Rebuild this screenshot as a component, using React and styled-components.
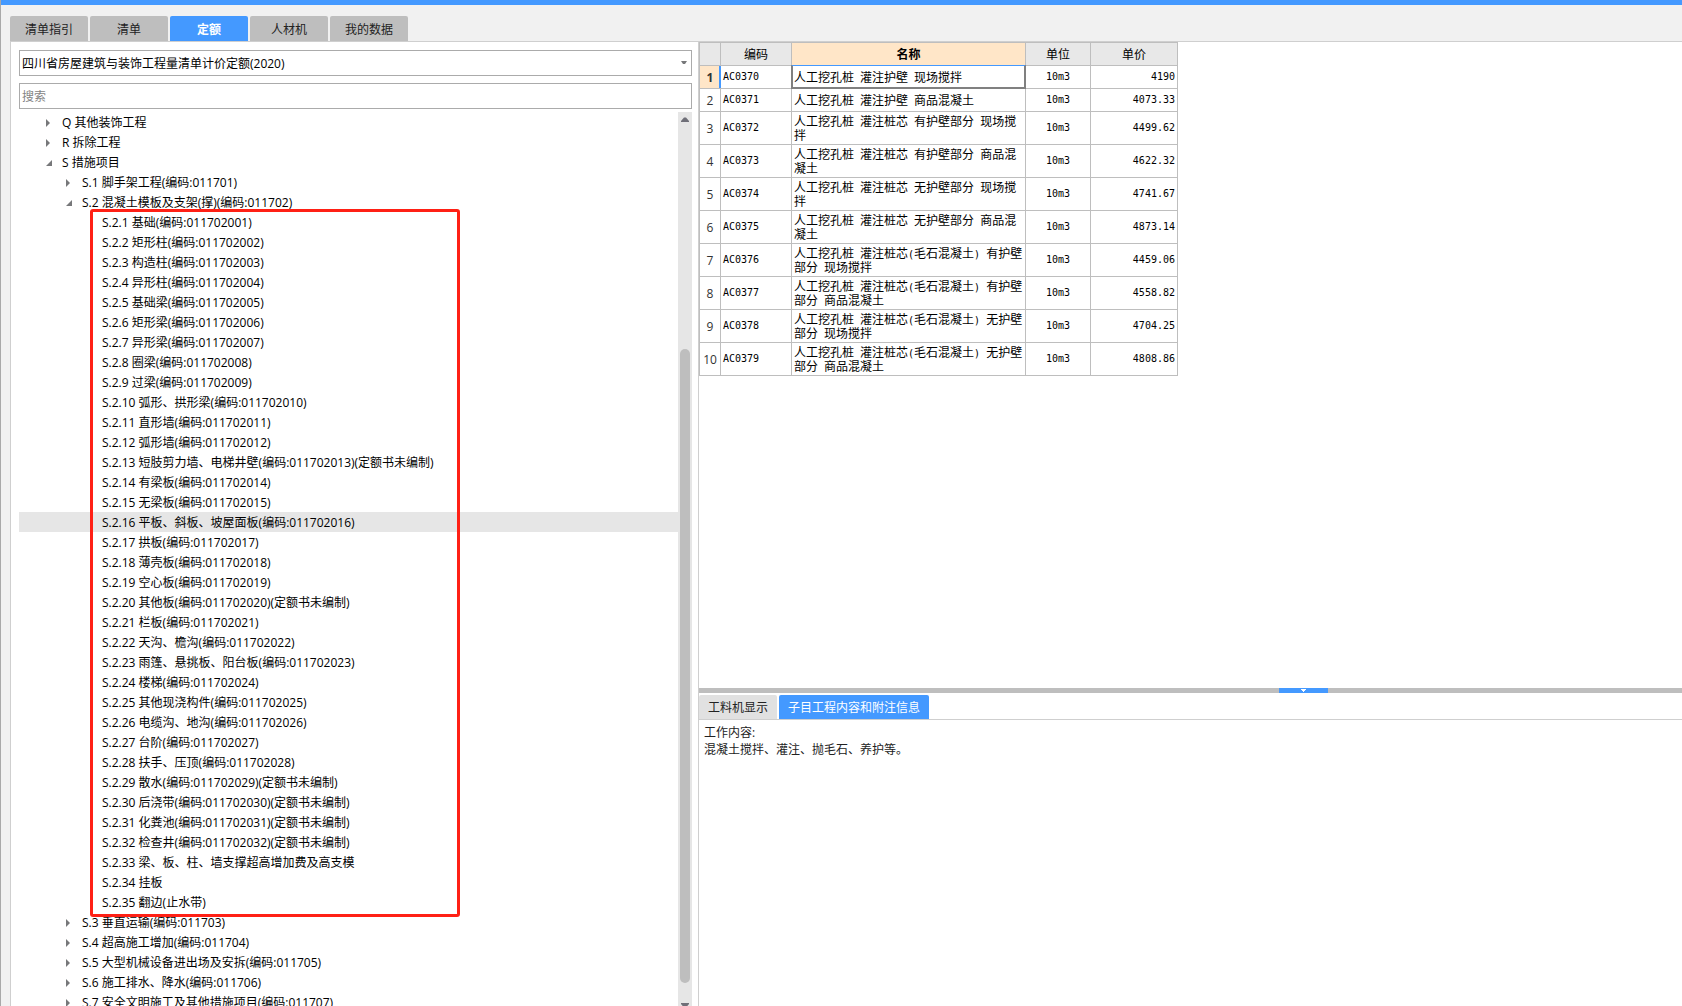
import React, { useState } from 'react'
import styled, { createGlobalStyle, css } from 'styled-components'

const GlobalStyle = createGlobalStyle`
  *, *::before, *::after {
    box-sizing: border-box;
  }
  body {
    margin: 0;
    background: #f1f1f1;
    overflow: hidden;
  }
  body, button, input, select {
    font-family: 'Open Sans', 'Noto Sans CJK SC', sans-serif;
    font-size: 12px;
    color: #000;
  }
`

const topTabs = ['清单指引', '清单', '定额', '人材机', '我的数据']

const subItems = [
  'S.2.1 基础(编码:011702001)',
  'S.2.2 矩形柱(编码:011702002)',
  'S.2.3 构造柱(编码:011702003)',
  'S.2.4 异形柱(编码:011702004)',
  'S.2.5 基础梁(编码:011702005)',
  'S.2.6 矩形梁(编码:011702006)',
  'S.2.7 异形梁(编码:011702007)',
  'S.2.8 圈梁(编码:011702008)',
  'S.2.9 过梁(编码:011702009)',
  'S.2.10 弧形、拱形梁(编码:011702010)',
  'S.2.11 直形墙(编码:011702011)',
  'S.2.12 弧形墙(编码:011702012)',
  'S.2.13 短肢剪力墙、电梯井壁(编码:011702013)(定额书未编制)',
  'S.2.14 有梁板(编码:011702014)',
  'S.2.15 无梁板(编码:011702015)',
  'S.2.16 平板、斜板、坡屋面板(编码:011702016)',
  'S.2.17 拱板(编码:011702017)',
  'S.2.18 薄壳板(编码:011702018)',
  'S.2.19 空心板(编码:011702019)',
  'S.2.20 其他板(编码:011702020)(定额书未编制)',
  'S.2.21 栏板(编码:011702021)',
  'S.2.22 天沟、檐沟(编码:011702022)',
  'S.2.23 雨篷、悬挑板、阳台板(编码:011702023)',
  'S.2.24 楼梯(编码:011702024)',
  'S.2.25 其他现浇构件(编码:011702025)',
  'S.2.26 电缆沟、地沟(编码:011702026)',
  'S.2.27 台阶(编码:011702027)',
  'S.2.28 扶手、压顶(编码:011702028)',
  'S.2.29 散水(编码:011702029)(定额书未编制)',
  'S.2.30 后浇带(编码:011702030)(定额书未编制)',
  'S.2.31 化粪池(编码:011702031)(定额书未编制)',
  'S.2.32 检查井(编码:011702032)(定额书未编制)',
  'S.2.33 梁、板、柱、墙支撑超高增加费及高支模',
  'S.2.34 挂板',
  'S.2.35 翻边(止水带)',
].map(label => ({ label }))

const tree = [
  { label: 'Q 其他装饰工程', branch: true },
  { label: 'R 拆除工程', branch: true },
  {
    label: 'S 措施项目',
    branch: true,
    children: [
      { label: 'S.1 脚手架工程(编码:011701)', branch: true },
      {
        label: 'S.2 混凝土模板及支架(撑)(编码:011702)',
        branch: true,
        marked: true,
        children: subItems,
      },
      { label: 'S.3 垂直运输(编码:011703)', branch: true },
      { label: 'S.4 超高施工增加(编码:011704)', branch: true },
      { label: 'S.5 大型机械设备进出场及安拆(编码:011705)', branch: true },
      { label: 'S.6 施工排水、降水(编码:011706)', branch: true },
      { label: 'S.7 安全文明施工及其他措施项目(编码:011707)', branch: true },
    ],
  },
]

const rows = [
  ['AC0370', '人工挖孔桩 灌注护壁 现场搅拌', '10m3', '4190'],
  ['AC0371', '人工挖孔桩 灌注护壁 商品混凝土', '10m3', '4073.33'],
  ['AC0372', '人工挖孔桩 灌注桩芯 有护壁部分 现场搅拌', '10m3', '4499.62'],
  ['AC0373', '人工挖孔桩 灌注桩芯 有护壁部分 商品混凝土', '10m3', '4622.32'],
  ['AC0374', '人工挖孔桩 灌注桩芯 无护壁部分 现场搅拌', '10m3', '4741.67'],
  ['AC0375', '人工挖孔桩 灌注桩芯 无护壁部分 商品混凝土', '10m3', '4873.14'],
  ['AC0376', '人工挖孔桩 灌注桩芯(毛石混凝土) 有护壁部分 现场搅拌', '10m3', '4459.06'],
  ['AC0377', '人工挖孔桩 灌注桩芯(毛石混凝土) 有护壁部分 商品混凝土', '10m3', '4558.82'],
  ['AC0378', '人工挖孔桩 灌注桩芯(毛石混凝土) 无护壁部分 现场搅拌', '10m3', '4704.25'],
  ['AC0379', '人工挖孔桩 灌注桩芯(毛石混凝土) 无护壁部分 商品混凝土', '10m3', '4808.86'],
]

const Shell = styled.div`
  display: flex;
  flex-direction: column;
  height: 100vh;
  padding-left: 9px;
  border-left: 1px solid #a9a9a9;
  overflow: hidden;
`

const TitleStrip = styled.div`
  flex: none;
  height: 5px;
  margin-left: -10px;
  background: #4499ff;
`

const TopTabs = styled.nav`
  display: flex;
  flex: none;
  gap: 2px;
  padding-top: 11px;
  border-bottom: 1px solid #cfcfcf;
`

const TopTab = styled.button`
  width: 78px;
  height: 25px;
  padding: 0;
  border: 0;
  border-radius: 2px 2px 0 0;
  background: #bebebe;
  color: #222;
  ${p => p.$active && css`
    background: #4499ff;
    color: #fff;
    font-weight: bold;
  `}
`

const Workspace = styled.main`
  display: grid;
  grid-template-columns: minmax(0, 86fr) minmax(0, 123fr);
  flex: 1;
  min-height: 0;
  background: #fff;
`

const LeftPane = styled.section`
  display: flex;
  flex-direction: column;
  min-height: 0;
  padding: 8px 6px 0 8px;
  border-left: 1px solid #cfcfcf;
`

const SelectBox = styled.label`
  display: grid;
  grid-template-columns: minmax(0, 1fr) 14px;
  align-items: center;
  flex: none;
  height: 26px;
  margin-bottom: 7px;
  border: 1px solid #ababab;
  select {
    grid-area: 1 / 1 / 2 / 3;
    height: 24px;
    padding: 0 2px;
    border: 0;
    outline: 0;
    background: none;
    appearance: none;
  }
  svg {
    grid-area: 1 / 2;
    justify-self: center;
    pointer-events: none;
  }
`

const SearchBox = styled.input`
  flex: none;
  height: 26px;
  margin-bottom: 3px;
  padding: 0 2px;
  border: 1px solid #ababab;
  outline: 0;
  &::placeholder {
    color: #848484;
  }
`

const TreeArea = styled.div`
  display: flex;
  flex: 1;
  min-height: 0;
  margin-bottom: -6px;
`

const TreeList = styled.ul`
  flex: 1;
  min-width: 0;
  margin: 0;
  padding: 0;
  list-style: none;
  overflow: hidden;
`

const Branch = styled.ul`
  position: relative;
  margin: 0;
  padding: 0;
  list-style: none;
  ${p => p.$marked && css`
    &::after {
      content: '';
      position: absolute;
      top: -3px;
      bottom: -5px;
      left: 71px;
      width: 370px;
      border: 3px solid #ff2015;
      border-radius: 3px;
      pointer-events: none;
    }
  `}
`

const TreeRow = styled.div`
  display: flex;
  align-items: center;
  gap: 4px;
  height: 20px;
  padding-top: 2px;
  padding-left: ${p => 19 + p.$level * 20}px;
  line-height: 18px;
  white-space: nowrap;
  background: ${p => (p.$selected ? '#e6e6e6' : 'none')};
`

const Toggle = styled.button`
  display: flex;
  align-items: center;
  justify-content: center;
  width: 20px;
  height: 18px;
  padding: 0;
  border: 0;
  background: none;
`

const Blank = styled.span`
  width: 20px;
`

const Scrollbar = styled.div`
  display: flex;
  flex-direction: column;
  align-items: center;
  width: 14px;
  background: #e6e6e6;
`

const ScrollArrow = styled.button`
  display: flex;
  align-items: center;
  justify-content: center;
  flex: none;
  width: 14px;
  height: 14px;
  padding: 0;
  border: 0;
  background: none;
`

const Track = styled.div`
  flex: ${p => p.$size};
`

const Thumb = styled.div`
  flex: 634;
  width: 10px;
  border-radius: 5px;
  background: #bebebe;
`

const RightPane = styled.section`
  display: grid;
  grid-template-rows: minmax(0, 646fr) 5px minmax(0, 313fr);
  min-height: 0;
  border-left: 1px solid #cfcfcf;
`

const TableArea = styled.div`
  overflow: hidden;
`

const Table = styled.table`
  width: 479px;
  table-layout: fixed;
  border-collapse: collapse;
  font-family: 'Noto Sans CJK SC', sans-serif;
  line-height: 14px;
  th, td {
    border: 1px solid #bebebe;
  }
  thead th {
    height: 23px;
    padding: 0;
    background: #e8e8e8;
    font-weight: normal;
  }
  thead th.current {
    background: #ffe6c8;
    font-weight: bold;
  }
  td {
    height: 23px;
    padding: 2px;
  }
`

const RowNumber = styled.th`
  position: relative;
  padding: 2px 0 0;
  font-family: 'Open Sans', sans-serif;
  font-weight: normal;
  color: #333;
  ${p => p.$current && css`
    background: #ffe6c8;
    font-weight: bold;
    &::after {
      content: '';
      position: absolute;
      top: 0;
      right: -1px;
      bottom: 0;
      width: 2px;
      background: #4499ff;
    }
  `}
`

const NameCell = styled.td`
  position: relative;
  ${p => p.$current && css`
    &::after {
      content: '';
      position: absolute;
      inset: -1px;
      border: 2px solid #808080;
      border-top: 1px solid #4499ff;
    }
  `}
`

const MonoCell = styled.td`
  font-family: 'DejaVu Sans Mono', monospace;
  font-size: 10px;
  text-align: ${p => p.$align || 'left'};
`

// zero line height, so that the line box stays that of the Chinese text
const Mono = styled.span`
  font-family: 'DejaVu Sans Mono', monospace;
  font-size: 10px;
  line-height: 0;
`

const Splitter = styled.div`
  background: #bebebe;
`

const SplitterHandle = styled.button`
  display: flex;
  align-items: center;
  justify-content: center;
  width: 49px;
  height: 5px;
  margin-left: 59%;
  padding: 0;
  border: 0;
  background: #4499ff;
`

const DetailPane = styled.div`
  min-height: 0;
  overflow: hidden;
`

const DetailTabs = styled.div`
  display: flex;
  gap: 2px;
  padding-top: 2px;
  border-bottom: 1px solid #cfcfcf;
`

const DetailTab = styled.button`
  height: 24px;
  padding: 0 9px;
  border: 0;
  border-radius: 2px 2px 0 0;
  background: ${p => (p.$active ? '#4499ff' : '#e1e1e1')};
  color: ${p => (p.$active ? '#fff' : '#222')};
`

const DetailText = styled.p`
  margin: 0;
  padding: 4px 5px;
  line-height: 17px;
  color: #222;
`

const Caret = ({ open }) => (
  <svg width="8" height="8" viewBox="0 0 8 8" fill="#77787a" aria-hidden="true">
    {open ? <path d="M8 1v6H2z" /> : <path d="M2 0v8l4-4z" />}
  </svg>
)

const Arrow = ({ up }) => (
  <svg width="8" height="5" viewBox="0 0 8 5" fill="#6f6f78" aria-hidden="true">
    {up ? <path d="M0 5V4l3-3.5h2L8 4v1z" /> : <path d="M0 0v1l3 3.5h2L8 1V0z" />}
  </svg>
)

const TreeNode = ({ node, level, selected, onSelect }) => {
  const [open, setOpen] = useState(Boolean(node.children))

  return (
    <li>
      <TreeRow
        $level={level}
        $selected={selected === node.label}
        onClick={() => onSelect(node.label)}
      >
        {node.branch ? (
          <Toggle aria-label={node.label} aria-expanded={open} onClick={() => setOpen(!open)}>
            <Caret open={open} />
          </Toggle>
        ) : <Blank />}
        <span>{node.label}</span>
      </TreeRow>
      {open && node.children && (
        <Branch $marked={node.marked}>
          {node.children.map(child => (
            <TreeNode
              key={child.label}
              node={child}
              level={level + 1}
              selected={selected}
              onSelect={onSelect}
            />
          ))}
        </Branch>
      )}
    </li>
  )
}

// spaces and brackets take half the width of a Chinese character
const HalfWidth = ({ text }) => text.split(/([ ()]+)/).map((part, i) => (
  i % 2 ? <Mono key={i}>{part}</Mono> : part
))

const PriceTable = () => (
  <Table>
    <colgroup>
      <col style={{ width: 21 }} />
      <col style={{ width: 71 }} />
      <col style={{ width: 234 }} />
      <col style={{ width: 65 }} />
      <col style={{ width: 87 }} />
    </colgroup>
    <thead>
      <tr>
        <th />
        <th>编码</th>
        <th className="current">名称</th>
        <th>单位</th>
        <th>单价</th>
      </tr>
    </thead>
    <tbody>
      {rows.map(([code, name, unit, price], i) => (
        <tr key={code}>
          <RowNumber scope="row" $current={i === 0}>{i + 1}</RowNumber>
          <MonoCell>{code}</MonoCell>
          <NameCell $current={i === 0}><HalfWidth text={name} /></NameCell>
          <MonoCell $align="center">{unit}</MonoCell>
          <MonoCell $align="right">{price}</MonoCell>
        </tr>
      ))}
    </tbody>
  </Table>
)

const App = () => {
  const [tab, setTab] = useState('定额')
  const [detail, setDetail] = useState(1)
  const [selected, setSelected] = useState(subItems[15].label)

  return (
    <Shell>
      <GlobalStyle />
      <TitleStrip />
      <TopTabs>
        {topTabs.map(name => (
          <TopTab key={name} $active={name === tab} onClick={() => setTab(name)}>{name}</TopTab>
        ))}
      </TopTabs>
      <Workspace>
        <LeftPane>
          <SelectBox>
            <select aria-label="定额">
              <option>四川省房屋建筑与装饰工程量清单计价定额(2020)</option>
            </select>
            <svg width="6" height="4" viewBox="0 0 6 4" fill="#77787a" aria-hidden="true">
              <path d="M0 0h6L4 3H2z" />
            </svg>
          </SelectBox>
          <SearchBox type="text" placeholder="搜索" aria-label="搜索" />
          <TreeArea>
            <TreeList>
              {tree.map(node => (
                <TreeNode
                  key={node.label}
                  node={node}
                  level={0}
                  selected={selected}
                  onSelect={setSelected}
                />
              ))}
            </TreeList>
            <Scrollbar>
              <ScrollArrow aria-label="向上"><Arrow up /></ScrollArrow>
              <Track $size={223} />
              <Thumb />
              <Track $size={15} />
              <ScrollArrow aria-label="向下"><Arrow /></ScrollArrow>
            </Scrollbar>
          </TreeArea>
        </LeftPane>
        <RightPane>
          <TableArea>
            <PriceTable />
          </TableArea>
          <Splitter>
            <SplitterHandle aria-label="折叠">
              <svg width="5" height="3" viewBox="0 0 5 3" fill="#fff" aria-hidden="true">
                <path d="M0 0h5v1H4v1H3v1H2V2H1V1H0z" />
              </svg>
            </SplitterHandle>
          </Splitter>
          <DetailPane>
            <DetailTabs>
              {['工料机显示', '子目工程内容和附注信息'].map((name, i) => (
                <DetailTab key={name} $active={i === detail} onClick={() => setDetail(i)}>
                  {name}
                </DetailTab>
              ))}
            </DetailTabs>
            <DetailText>
              工作内容:<br />
              混凝土搅拌、灌注、抛毛石、养护等。
            </DetailText>
          </DetailPane>
        </RightPane>
      </Workspace>
    </Shell>
  )
}

export default App
